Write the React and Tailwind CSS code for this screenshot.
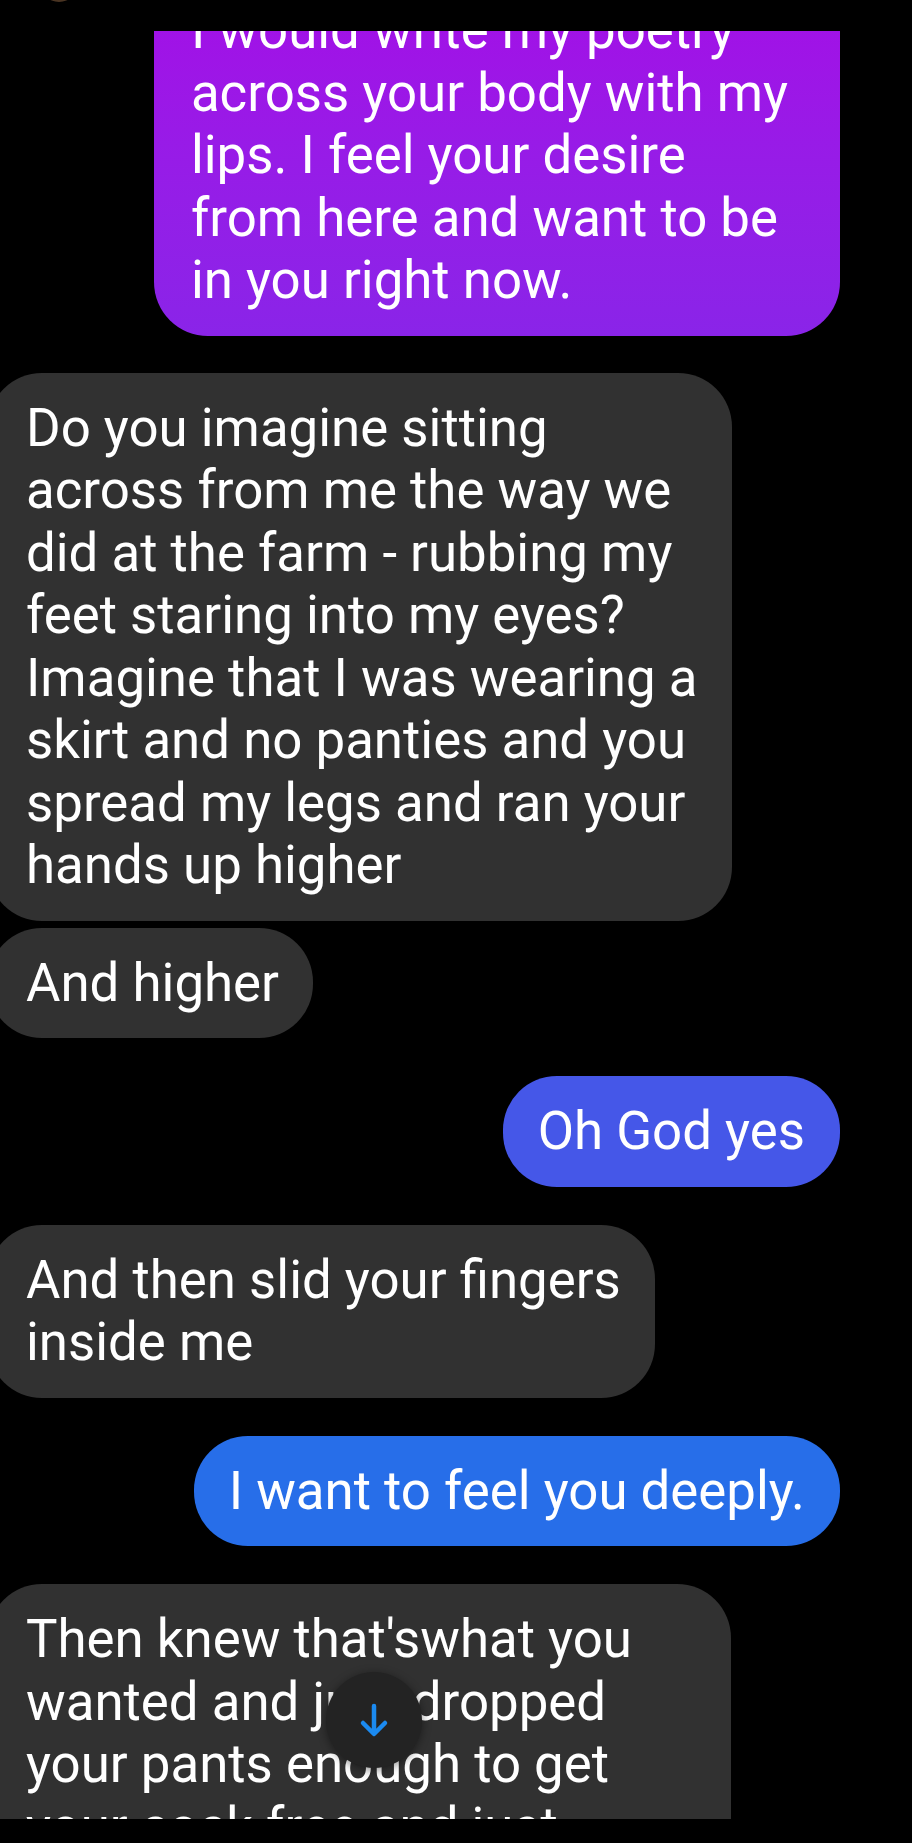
import React from 'react';

const messages = [
  {
    mine: true,
    color: 'bg-gradient-to-b from-[#a40ce6] to-[#8a24e8] pl-[37px] pr-[52px]',
    lines: [
      'I would write my poetry',
      'across your body with my',
      'lips. I feel your desire',
      'from here and want to be',
      'in you right now.',
    ],
  },
  {
    mine: false,
    gap: 'mt-[37px]',
    lines: [
      'Do you imagine sitting',
      'across from me the way we',
      'did at the farm - rubbing my',
      'feet staring into my eyes?',
      'Imagine that I was wearing a',
      'skirt and no panties and you',
      'spread my legs and ran your',
      'hands up higher',
    ],
  },
  { mine: false, gap: 'mt-[7px]', lines: ['And higher'] },
  { mine: true, gap: 'mt-[38px]', color: 'bg-[#4557e8] px-[35px]', lines: ['Oh God yes'] },
  {
    mine: false,
    gap: 'mt-[38px]',
    lines: ['And then slid your fingers', 'inside me'],
  },
  {
    mine: true,
    gap: 'mt-[38px]',
    color: 'bg-[#276ee9] px-[35px]',
    lines: ['I want to feel you deeply.'],
  },
  {
    mine: false,
    gap: 'mt-[38px]',
    extra: 'w-[743px]',
    lines: [
      "Then knew that'swhat you",
      'wanted and just dropped',
      'your pants enough to get',
      'your cock free and just',
    ],
  },
];

function Bubble({ mine, color, gap, extra, lines }) {
  const side = mine
    ? `self-end mr-[72px] ${color}`
    : 'self-start ml-[-12px] bg-[#313131] pl-[38px] pr-[34px]';
  return (
    <div
      className={`${gap || ''} ${side} ${extra || ''} rounded-[54px] py-[24px] text-white text-[52.8px] leading-[62.5px] whitespace-nowrap`}
    >
      {lines.map((line, i) => (
        <div key={i}>{line}</div>
      ))}
    </div>
  );
}

export default function App() {
  return (
    <div
      className="relative w-[912px] h-[1843px] bg-black overflow-hidden"
      style={{ fontFamily: 'Roboto, "Noto Sans", sans-serif' }}
    >
      {/* avatar edge peeking at the top */}
      <div className="absolute left-[40px] top-[-36px] w-[38px] h-[38px] rounded-full bg-[#4a3422]" />

      {/* Message list */}
      <div className="mt-[31px] h-[1788px] overflow-hidden">
        <div className="flex flex-col mt-[-56px]">
          {messages.map((m, i) => (
            <Bubble key={i} {...m} />
          ))}
        </div>
      </div>

      {/* Scroll to bottom */}
      <button className="absolute left-[326px] top-[1672px] w-[96px] h-[96px] rounded-full bg-[#232323] shadow-[0_2px_10px_rgba(0,0,0,0.45)] flex items-center justify-center">
        <svg width="32" height="36" viewBox="0 0 32 36" fill="none">
          <path
            d="M16 4 V31 M5 21 L16 32 L27 21"
            stroke="#1b8af0"
            strokeWidth="4.5"
            strokeLinecap="round"
            strokeLinejoin="round"
          />
        </svg>
      </button>
    </div>
  );
}
